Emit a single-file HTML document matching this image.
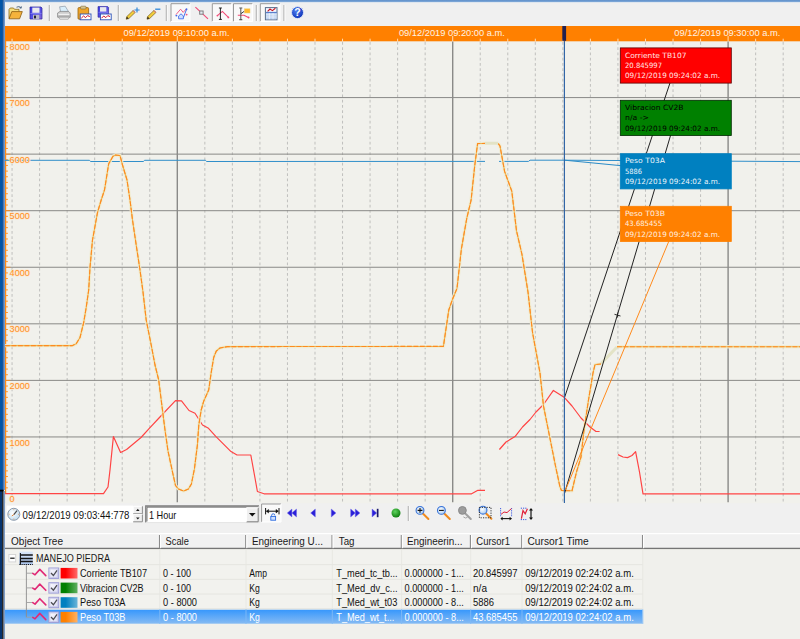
<!DOCTYPE html>
<html lang="es"><head><meta charset="utf-8"><title>Trend</title>
<style>html,body{margin:0;padding:0;background:#f0f0f0;overflow:hidden}body{width:800px;height:639px;position:relative}svg{display:block;position:absolute;left:0;top:0}text{white-space:pre}</style>
</head><body>
<svg width="800" height="639" viewBox="0 0 800 639">
<defs>
<linearGradient id="gsel" x1="0" y1="0" x2="0" y2="1"><stop offset="0" stop-color="#3797fc"/><stop offset="1" stop-color="#86bbf3"/></linearGradient>
<linearGradient id="ghead" x1="0" y1="0" x2="0" y2="1"><stop offset="0" stop-color="#ffffff"/><stop offset="1" stop-color="#f1f1f1"/></linearGradient>
<linearGradient id="gred" x1="0" y1="0" x2="1" y2="0"><stop offset="0.3" stop-color="#ff0000"/><stop offset="1" stop-color="#ff6a6a"/></linearGradient>
<linearGradient id="ggreen" x1="0" y1="0" x2="1" y2="0"><stop offset="0.3" stop-color="#008000"/><stop offset="1" stop-color="#62b062"/></linearGradient>
<linearGradient id="gblue" x1="0" y1="0" x2="1" y2="0"><stop offset="0.3" stop-color="#0080c0"/><stop offset="1" stop-color="#6ab4d8"/></linearGradient>
<linearGradient id="gorange" x1="0" y1="0" x2="1" y2="0"><stop offset="0.3" stop-color="#ff8000"/><stop offset="1" stop-color="#ffb265"/></linearGradient>
<linearGradient id="gchk" x1="0" y1="0" x2="1" y2="1"><stop offset="0" stop-color="#ffffff"/><stop offset="1" stop-color="#d6d6f2"/></linearGradient>
<linearGradient id="gtop" x1="0" y1="0" x2="0" y2="1"><stop offset="0" stop-color="#5d8fca"/><stop offset="0.7" stop-color="#7fa8d8"/><stop offset="1" stop-color="#dfe8f2"/></linearGradient>
<radialGradient id="ghelp" cx="0.4" cy="0.35" r="0.7"><stop offset="0" stop-color="#4f7df0"/><stop offset="1" stop-color="#0a2fb5"/></radialGradient>
<radialGradient id="gball" cx="0.4" cy="0.35" r="0.7"><stop offset="0" stop-color="#5fd35f"/><stop offset="1" stop-color="#0a7a0a"/></radialGradient>
<radialGradient id="gclock" cx="0.4" cy="0.4" r="0.7"><stop offset="0" stop-color="#ffffff"/><stop offset="1" stop-color="#b9d9ee"/></radialGradient>
<radialGradient id="glens" cx="0.4" cy="0.4" r="0.7"><stop offset="0" stop-color="#ffffff"/><stop offset="1" stop-color="#9cc3ef"/></radialGradient>
<linearGradient id="ggrp" x1="0" y1="0" x2="0" y2="1"><stop offset="0" stop-color="#dbe7f9"/><stop offset="1" stop-color="#a9c3ea"/></linearGradient>
<linearGradient id="gflop" x1="0" y1="0" x2="1" y2="1"><stop offset="0" stop-color="#3c3ce0"/><stop offset="0.6" stop-color="#5a54e6"/><stop offset="1" stop-color="#8a6ad8"/></linearGradient>
<clipPath id="plotclip"><rect x="5" y="41" width="795" height="462.5"/></clipPath>
</defs>
<rect x="0" y="0" width="800" height="639" fill="#f0f0f0"/>
<rect x="5" y="41" width="795" height="462.3" fill="#f1f1ec"/>
<rect x="5" y="26" width="795" height="15.3" fill="#ff8000"/>
<g stroke="#bdbdba" stroke-width="0.95" stroke-dasharray="2.75 2.5" fill="none"><line x1="12.06" y1="42" x2="12.06" y2="502.3"/><line x1="39.60" y1="42" x2="39.60" y2="502.3"/><line x1="67.14" y1="42" x2="67.14" y2="502.3"/><line x1="94.68" y1="42" x2="94.68" y2="502.3"/><line x1="122.22" y1="42" x2="122.22" y2="502.3"/><line x1="149.76" y1="42" x2="149.76" y2="502.3"/><line x1="204.84" y1="42" x2="204.84" y2="502.3"/><line x1="232.38" y1="42" x2="232.38" y2="502.3"/><line x1="259.92" y1="42" x2="259.92" y2="502.3"/><line x1="287.46" y1="42" x2="287.46" y2="502.3"/><line x1="315.00" y1="42" x2="315.00" y2="502.3"/><line x1="342.54" y1="42" x2="342.54" y2="502.3"/><line x1="370.08" y1="42" x2="370.08" y2="502.3"/><line x1="397.62" y1="42" x2="397.62" y2="502.3"/><line x1="425.16" y1="42" x2="425.16" y2="502.3"/><line x1="480.24" y1="42" x2="480.24" y2="502.3"/><line x1="507.78" y1="42" x2="507.78" y2="502.3"/><line x1="535.32" y1="42" x2="535.32" y2="502.3"/><line x1="562.86" y1="42" x2="562.86" y2="502.3"/><line x1="590.40" y1="42" x2="590.40" y2="502.3"/><line x1="617.94" y1="42" x2="617.94" y2="502.3"/><line x1="645.48" y1="42" x2="645.48" y2="502.3"/><line x1="673.02" y1="42" x2="673.02" y2="502.3"/><line x1="700.56" y1="42" x2="700.56" y2="502.3"/><line x1="755.64" y1="42" x2="755.64" y2="502.3"/><line x1="783.18" y1="42" x2="783.18" y2="502.3"/></g>
<g stroke="#898987" stroke-width="1.0" fill="none"><line x1="6" y1="436.94" x2="800" y2="436.94"/><line x1="6" y1="380.38" x2="800" y2="380.38"/><line x1="6" y1="323.82" x2="800" y2="323.82"/><line x1="6" y1="267.26" x2="800" y2="267.26"/><line x1="6" y1="210.70" x2="800" y2="210.70"/><line x1="6" y1="154.14" x2="800" y2="154.14"/><line x1="6" y1="97.58" x2="800" y2="97.58"/></g>
<g stroke="#8a8a88" stroke-width="1.4" fill="none"><line x1="177.30" y1="41.5" x2="177.30" y2="502.3"/><line x1="452.70" y1="41.5" x2="452.70" y2="502.3"/><line x1="728.10" y1="41.5" x2="728.10" y2="502.3"/></g>
<g stroke="#ffdcb4" stroke-width="1" fill="none"><line x1="12.06" y1="38.7" x2="12.06" y2="41.3"/><line x1="39.60" y1="38.7" x2="39.60" y2="41.3"/><line x1="67.14" y1="38.7" x2="67.14" y2="41.3"/><line x1="94.68" y1="38.7" x2="94.68" y2="41.3"/><line x1="122.22" y1="38.7" x2="122.22" y2="41.3"/><line x1="149.76" y1="38.7" x2="149.76" y2="41.3"/><line x1="177.30" y1="36" x2="177.30" y2="41.3"/><line x1="204.84" y1="38.7" x2="204.84" y2="41.3"/><line x1="232.38" y1="38.7" x2="232.38" y2="41.3"/><line x1="259.92" y1="38.7" x2="259.92" y2="41.3"/><line x1="287.46" y1="38.7" x2="287.46" y2="41.3"/><line x1="315.00" y1="38.7" x2="315.00" y2="41.3"/><line x1="342.54" y1="38.7" x2="342.54" y2="41.3"/><line x1="370.08" y1="38.7" x2="370.08" y2="41.3"/><line x1="397.62" y1="38.7" x2="397.62" y2="41.3"/><line x1="425.16" y1="38.7" x2="425.16" y2="41.3"/><line x1="452.70" y1="36" x2="452.70" y2="41.3"/><line x1="480.24" y1="38.7" x2="480.24" y2="41.3"/><line x1="507.78" y1="38.7" x2="507.78" y2="41.3"/><line x1="535.32" y1="38.7" x2="535.32" y2="41.3"/><line x1="562.86" y1="38.7" x2="562.86" y2="41.3"/><line x1="590.40" y1="38.7" x2="590.40" y2="41.3"/><line x1="617.94" y1="38.7" x2="617.94" y2="41.3"/><line x1="645.48" y1="38.7" x2="645.48" y2="41.3"/><line x1="673.02" y1="38.7" x2="673.02" y2="41.3"/><line x1="700.56" y1="38.7" x2="700.56" y2="41.3"/><line x1="728.10" y1="36" x2="728.10" y2="41.3"/><line x1="755.64" y1="38.7" x2="755.64" y2="41.3"/><line x1="783.18" y1="38.7" x2="783.18" y2="41.3"/></g>
<text x="176.5" y="35.7" font-size="9.3" fill="#fff3e4" text-anchor="middle" font-family='"Liberation Sans", Arial, sans-serif' textLength="106" lengthAdjust="spacingAndGlyphs">09/12/2019 09:10:00 a.m.</text>
<text x="451.9" y="35.7" font-size="9.3" fill="#fff3e4" text-anchor="middle" font-family='"Liberation Sans", Arial, sans-serif' textLength="106" lengthAdjust="spacingAndGlyphs">09/12/2019 09:20:00 a.m.</text>
<text x="727.3" y="35.7" font-size="9.3" fill="#fff3e4" text-anchor="middle" font-family='"Liberation Sans", Arial, sans-serif' textLength="106" lengthAdjust="spacingAndGlyphs">09/12/2019 09:30:00 a.m.</text>
<rect x="5" y="41" width="1.2" height="453" fill="#ff8a14"/>
<g stroke="#ff8a14" stroke-width="0.9" fill="none"><line x1="6" y1="493.50" x2="10.3" y2="493.50"/><line x1="6" y1="487.84" x2="7.9" y2="487.84"/><line x1="6" y1="482.19" x2="7.9" y2="482.19"/><line x1="6" y1="476.53" x2="7.9" y2="476.53"/><line x1="6" y1="470.88" x2="7.9" y2="470.88"/><line x1="6" y1="465.22" x2="7.9" y2="465.22"/><line x1="6" y1="459.56" x2="7.9" y2="459.56"/><line x1="6" y1="453.91" x2="7.9" y2="453.91"/><line x1="6" y1="448.25" x2="7.9" y2="448.25"/><line x1="6" y1="442.60" x2="7.9" y2="442.60"/><line x1="6" y1="436.94" x2="10.3" y2="436.94"/><line x1="6" y1="431.28" x2="7.9" y2="431.28"/><line x1="6" y1="425.63" x2="7.9" y2="425.63"/><line x1="6" y1="419.97" x2="7.9" y2="419.97"/><line x1="6" y1="414.32" x2="7.9" y2="414.32"/><line x1="6" y1="408.66" x2="7.9" y2="408.66"/><line x1="6" y1="403.00" x2="7.9" y2="403.00"/><line x1="6" y1="397.35" x2="7.9" y2="397.35"/><line x1="6" y1="391.69" x2="7.9" y2="391.69"/><line x1="6" y1="386.04" x2="7.9" y2="386.04"/><line x1="6" y1="380.38" x2="10.3" y2="380.38"/><line x1="6" y1="374.72" x2="7.9" y2="374.72"/><line x1="6" y1="369.07" x2="7.9" y2="369.07"/><line x1="6" y1="363.41" x2="7.9" y2="363.41"/><line x1="6" y1="357.76" x2="7.9" y2="357.76"/><line x1="6" y1="352.10" x2="7.9" y2="352.10"/><line x1="6" y1="346.44" x2="7.9" y2="346.44"/><line x1="6" y1="340.79" x2="7.9" y2="340.79"/><line x1="6" y1="335.13" x2="7.9" y2="335.13"/><line x1="6" y1="329.48" x2="7.9" y2="329.48"/><line x1="6" y1="323.82" x2="10.3" y2="323.82"/><line x1="6" y1="318.16" x2="7.9" y2="318.16"/><line x1="6" y1="312.51" x2="7.9" y2="312.51"/><line x1="6" y1="306.85" x2="7.9" y2="306.85"/><line x1="6" y1="301.20" x2="7.9" y2="301.20"/><line x1="6" y1="295.54" x2="7.9" y2="295.54"/><line x1="6" y1="289.88" x2="7.9" y2="289.88"/><line x1="6" y1="284.23" x2="7.9" y2="284.23"/><line x1="6" y1="278.57" x2="7.9" y2="278.57"/><line x1="6" y1="272.92" x2="7.9" y2="272.92"/><line x1="6" y1="267.26" x2="10.3" y2="267.26"/><line x1="6" y1="261.60" x2="7.9" y2="261.60"/><line x1="6" y1="255.95" x2="7.9" y2="255.95"/><line x1="6" y1="250.29" x2="7.9" y2="250.29"/><line x1="6" y1="244.64" x2="7.9" y2="244.64"/><line x1="6" y1="238.98" x2="7.9" y2="238.98"/><line x1="6" y1="233.32" x2="7.9" y2="233.32"/><line x1="6" y1="227.67" x2="7.9" y2="227.67"/><line x1="6" y1="222.01" x2="7.9" y2="222.01"/><line x1="6" y1="216.36" x2="7.9" y2="216.36"/><line x1="6" y1="210.70" x2="10.3" y2="210.70"/><line x1="6" y1="205.04" x2="7.9" y2="205.04"/><line x1="6" y1="199.39" x2="7.9" y2="199.39"/><line x1="6" y1="193.73" x2="7.9" y2="193.73"/><line x1="6" y1="188.08" x2="7.9" y2="188.08"/><line x1="6" y1="182.42" x2="7.9" y2="182.42"/><line x1="6" y1="176.76" x2="7.9" y2="176.76"/><line x1="6" y1="171.11" x2="7.9" y2="171.11"/><line x1="6" y1="165.45" x2="7.9" y2="165.45"/><line x1="6" y1="159.80" x2="7.9" y2="159.80"/><line x1="6" y1="154.14" x2="10.3" y2="154.14"/><line x1="6" y1="148.48" x2="7.9" y2="148.48"/><line x1="6" y1="142.83" x2="7.9" y2="142.83"/><line x1="6" y1="137.17" x2="7.9" y2="137.17"/><line x1="6" y1="131.52" x2="7.9" y2="131.52"/><line x1="6" y1="125.86" x2="7.9" y2="125.86"/><line x1="6" y1="120.20" x2="7.9" y2="120.20"/><line x1="6" y1="114.55" x2="7.9" y2="114.55"/><line x1="6" y1="108.89" x2="7.9" y2="108.89"/><line x1="6" y1="103.24" x2="7.9" y2="103.24"/><line x1="6" y1="97.58" x2="10.3" y2="97.58"/><line x1="6" y1="91.92" x2="7.9" y2="91.92"/><line x1="6" y1="86.27" x2="7.9" y2="86.27"/><line x1="6" y1="80.61" x2="7.9" y2="80.61"/><line x1="6" y1="74.96" x2="7.9" y2="74.96"/><line x1="6" y1="69.30" x2="7.9" y2="69.30"/><line x1="6" y1="63.64" x2="7.9" y2="63.64"/><line x1="6" y1="57.99" x2="7.9" y2="57.99"/><line x1="6" y1="52.33" x2="7.9" y2="52.33"/><line x1="6" y1="46.68" x2="7.9" y2="46.68"/></g>
<g clip-path="url(#plotclip)" fill="none" stroke-linejoin="round" stroke-linecap="butt">
<polyline points="5.0,160.3 89.5,160.3 90.5,161.5 143.5,161.5 144.5,160.3 205.5,160.3 206.5,161.5 485.0,161.4" stroke="#318fca" stroke-width="1.0"/>
<polyline points="499.0,161.4 528.5,161.4 530.0,160.2 564.5,160.2 800.0,161.6" stroke="#318fca" stroke-width="1.0"/>
<line x1="564.5" y1="160.2" x2="676" y2="171" stroke="#2b8cc8" stroke-width="1"/>
<polyline points="5.0,493.7 103.5,493.7 108.0,487.0 110.0,470.0 113.4,436.6 120.6,452.5 126.6,449.5 141.0,437.5 150.0,427.6 159.0,418.0 175.5,400.6 181.5,400.8 189.0,410.5 195.0,413.2 202.5,425.0 208.5,428.3 216.0,436.6 231.0,451.6 237.0,455.0 250.8,455.0 255.0,478.0 257.4,491.5 264.0,493.8 471.6,493.8 477.9,490.3 485.0,490.3" stroke="#ff4444" stroke-width="1.2"/>
<polyline points="499.4,449.5 506.0,442.0 515.0,436.6 522.5,427.0 530.0,419.5 536.0,412.0 543.5,404.5 553.4,390.4 564.5,397.6 572.0,406.0 581.0,418.0 590.0,427.0 596.0,431.5 599.6,431.5" stroke="#ff4444" stroke-width="1.2"/>
<polyline points="618.0,454.6 623.0,457.0 627.5,457.6 632.0,455.5 635.6,451.6 639.5,472.0 643.0,493.8 800.0,493.8" stroke="#ff4444" stroke-width="1.2"/>
<polyline points="5.0,345.6 72.5,345.6 76.2,343.8 80.0,337.5 83.7,322.5 86.2,307.5 88.7,290.0 90.0,267.5 92.5,240.0 97.5,212.5 101.2,200.0 104.5,190.0 108.7,163.8 113.0,156.3 115.5,155.0 120.0,155.5 122.5,165.0 127.0,180.0 130.0,200.0 132.5,220.0 136.2,245.0 140.0,270.0 143.0,292.0 146.2,320.0 151.2,345.0 155.0,365.0 158.7,380.0 161.2,400.0 165.0,430.0 168.0,451.0 172.5,472.0 175.5,485.5 178.5,489.0 183.6,491.0 188.4,489.0 191.4,484.0 194.4,469.0 197.4,445.0 198.8,425.0 201.2,410.0 203.7,401.2 208.7,390.0 211.2,372.5 213.7,357.5 216.2,351.2 220.0,348.0 227.5,346.6 443.4,346.4 448.8,310.0 452.6,299.0 457.0,288.4 461.4,248.8 466.8,218.2 471.1,200.2 474.7,166.0 477.6,143.6 485.0,143.4" stroke="#f1ecd2" stroke-width="3.4" stroke-opacity="0.9"/>
<polyline points="498.3,143.6 500.0,146.0 504.6,171.4 511.8,191.2 516.5,230.8 521.9,254.2 528.0,292.0 532.6,333.0 540.0,373.0 543.5,406.0 549.5,436.0 555.5,466.0 560.0,487.0 561.5,490.5 572.0,490.8 576.5,472.0 581.0,457.0 584.0,430.0 588.5,400.0 593.0,373.0 595.0,364.6 601.0,364.0" stroke="#f1ecd2" stroke-width="3.4" stroke-opacity="0.9"/>
<polyline points="617.0,346.7 800.0,346.7" stroke="#f1ecd2" stroke-width="3.4" stroke-opacity="0.9"/>
<polyline points="485.0,143.3 498.3,143.3" stroke="#e3e3c6" stroke-width="3"/>
<polyline points="601.0,363.6 617.0,347.0" stroke="#e3e3c6" stroke-width="3"/>
<polyline points="5.0,345.6 72.5,345.6 76.2,343.8 80.0,337.5 83.7,322.5 86.2,307.5 88.7,290.0 90.0,267.5 92.5,240.0 97.5,212.5 101.2,200.0 104.5,190.0 108.7,163.8 113.0,156.3 115.5,155.0 120.0,155.5 122.5,165.0 127.0,180.0 130.0,200.0 132.5,220.0 136.2,245.0 140.0,270.0 143.0,292.0 146.2,320.0 151.2,345.0 155.0,365.0 158.7,380.0 161.2,400.0 165.0,430.0 168.0,451.0 172.5,472.0 175.5,485.5 178.5,489.0 183.6,491.0 188.4,489.0 191.4,484.0 194.4,469.0 197.4,445.0 198.8,425.0 201.2,410.0 203.7,401.2 208.7,390.0 211.2,372.5 213.7,357.5 216.2,351.2 220.0,348.0 227.5,346.6 443.4,346.4 448.8,310.0 452.6,299.0 457.0,288.4 461.4,248.8 466.8,218.2 471.1,200.2 474.7,166.0 477.6,143.6 485.0,143.4" stroke="#e9b654" stroke-width="1.05"/>
<polyline points="5.0,345.6 72.5,345.6 76.2,343.8 80.0,337.5 83.7,322.5 86.2,307.5 88.7,290.0 90.0,267.5 92.5,240.0 97.5,212.5 101.2,200.0 104.5,190.0 108.7,163.8 113.0,156.3 115.5,155.0 120.0,155.5 122.5,165.0 127.0,180.0 130.0,200.0 132.5,220.0 136.2,245.0 140.0,270.0 143.0,292.0 146.2,320.0 151.2,345.0 155.0,365.0 158.7,380.0 161.2,400.0 165.0,430.0 168.0,451.0 172.5,472.0 175.5,485.5 178.5,489.0 183.6,491.0 188.4,489.0 191.4,484.0 194.4,469.0 197.4,445.0 198.8,425.0 201.2,410.0 203.7,401.2 208.7,390.0 211.2,372.5 213.7,357.5 216.2,351.2 220.0,348.0 227.5,346.6 443.4,346.4 448.8,310.0 452.6,299.0 457.0,288.4 461.4,248.8 466.8,218.2 471.1,200.2 474.7,166.0 477.6,143.6 485.0,143.4" stroke="#ff8a20" stroke-width="1.15" stroke-dasharray="4.8 1.7"/>
<polyline points="498.3,143.6 500.0,146.0 504.6,171.4 511.8,191.2 516.5,230.8 521.9,254.2 528.0,292.0 532.6,333.0 540.0,373.0 543.5,406.0 549.5,436.0 555.5,466.0 560.0,487.0 561.5,490.5 572.0,490.8 576.5,472.0 581.0,457.0 584.0,430.0 588.5,400.0 593.0,373.0 595.0,364.6 601.0,364.0" stroke="#e9b654" stroke-width="1.05"/>
<polyline points="498.3,143.6 500.0,146.0 504.6,171.4 511.8,191.2 516.5,230.8 521.9,254.2 528.0,292.0 532.6,333.0 540.0,373.0 543.5,406.0 549.5,436.0 555.5,466.0 560.0,487.0 561.5,490.5 572.0,490.8 576.5,472.0 581.0,457.0 584.0,430.0 588.5,400.0 593.0,373.0 595.0,364.6 601.0,364.0" stroke="#ff8a20" stroke-width="1.15" stroke-dasharray="4.8 1.7"/>
<polyline points="617.0,346.7 800.0,346.7" stroke="#e9b654" stroke-width="1.05"/>
<polyline points="617.0,346.7 800.0,346.7" stroke="#ff8a20" stroke-width="1.15" stroke-dasharray="4.8 1.7"/>
<line x1="564.5" y1="397.6" x2="676" y2="65" stroke="#222222" stroke-width="1.0"/>
<line x1="564.5" y1="493.5" x2="676" y2="117" stroke="#222222" stroke-width="1.0"/>
<line x1="565.5" y1="490" x2="676" y2="224" stroke="#ff8a1c" stroke-width="1"/>
<path d="M614.5 314.3 L620.5 316 M617.8 312.5 L617.3 317.5" stroke="#1c1c1c" stroke-width="0.9"/>
<line x1="564.4" y1="41" x2="564.4" y2="503" stroke="#2d62a4" stroke-width="1.15"/>
</g>
<rect x="562.3" y="26" width="3.8" height="14.8" fill="#23204e"/>
<text x="9.6" y="502.4" font-size="9.3" fill="#ff8f26" text-anchor="start" font-family='"Liberation Sans", Arial, sans-serif' textLength="5.1" lengthAdjust="spacingAndGlyphs" stroke="#fbe9d0" stroke-width="1.6" stroke-opacity="0.9" paint-order="stroke">0</text>
<text x="9.6" y="445.5" font-size="9.3" fill="#ff8f26" text-anchor="start" font-family='"Liberation Sans", Arial, sans-serif' textLength="20.3" lengthAdjust="spacingAndGlyphs" stroke="#fbe9d0" stroke-width="1.6" stroke-opacity="0.9" paint-order="stroke">1000</text>
<text x="9.6" y="389.0" font-size="9.3" fill="#ff8f26" text-anchor="start" font-family='"Liberation Sans", Arial, sans-serif' textLength="20.3" lengthAdjust="spacingAndGlyphs" stroke="#fbe9d0" stroke-width="1.6" stroke-opacity="0.9" paint-order="stroke">2000</text>
<text x="9.6" y="332.4" font-size="9.3" fill="#ff8f26" text-anchor="start" font-family='"Liberation Sans", Arial, sans-serif' textLength="20.3" lengthAdjust="spacingAndGlyphs" stroke="#fbe9d0" stroke-width="1.6" stroke-opacity="0.9" paint-order="stroke">3000</text>
<text x="9.6" y="275.9" font-size="9.3" fill="#ff8f26" text-anchor="start" font-family='"Liberation Sans", Arial, sans-serif' textLength="20.3" lengthAdjust="spacingAndGlyphs" stroke="#fbe9d0" stroke-width="1.6" stroke-opacity="0.9" paint-order="stroke">4000</text>
<text x="9.6" y="219.3" font-size="9.3" fill="#ff8f26" text-anchor="start" font-family='"Liberation Sans", Arial, sans-serif' textLength="20.3" lengthAdjust="spacingAndGlyphs" stroke="#fbe9d0" stroke-width="1.6" stroke-opacity="0.9" paint-order="stroke">5000</text>
<text x="9.6" y="162.7" font-size="9.3" fill="#ff8f26" text-anchor="start" font-family='"Liberation Sans", Arial, sans-serif' textLength="20.3" lengthAdjust="spacingAndGlyphs" stroke="#fbe9d0" stroke-width="1.6" stroke-opacity="0.9" paint-order="stroke">6000</text>
<text x="9.6" y="106.2" font-size="9.3" fill="#ff8f26" text-anchor="start" font-family='"Liberation Sans", Arial, sans-serif' textLength="20.3" lengthAdjust="spacingAndGlyphs" stroke="#fbe9d0" stroke-width="1.6" stroke-opacity="0.9" paint-order="stroke">7000</text>
<text x="9.6" y="50.4" font-size="9.3" fill="#ff8f26" text-anchor="start" font-family='"Liberation Sans", Arial, sans-serif' textLength="20.3" lengthAdjust="spacingAndGlyphs" stroke="#fbe9d0" stroke-width="1.6" stroke-opacity="0.9" paint-order="stroke">8000</text>
<rect x="620.3" y="47.9" width="111" height="35.2" fill="#ff0000" stroke="#5a0000" stroke-width="0.8"/>
<text x="625" y="57.6" font-size="7.3" fill="#ffe6e6" text-anchor="start" font-family='"DejaVu Sans Condensed", "DejaVu Sans", "Liberation Sans", sans-serif' textLength="61.5" lengthAdjust="spacingAndGlyphs">Corriente TB107</text>
<text x="625" y="68.0" font-size="7.3" fill="#ffe6e6" text-anchor="start" font-family='"DejaVu Sans Condensed", "DejaVu Sans", "Liberation Sans", sans-serif' textLength="37" lengthAdjust="spacingAndGlyphs">20.845997</text>
<text x="625" y="78.4" font-size="7.3" fill="#ffe6e6" text-anchor="start" font-family='"DejaVu Sans Condensed", "DejaVu Sans", "Liberation Sans", sans-serif' textLength="95" lengthAdjust="spacingAndGlyphs">09/12/2019 09:24:02 a.m.</text>
<rect x="620.3" y="100.3" width="111" height="35.2" fill="#008000" stroke="#002800" stroke-width="0.8"/>
<text x="625" y="110.0" font-size="7.3" fill="#000000" text-anchor="start" font-family='"DejaVu Sans Condensed", "DejaVu Sans", "Liberation Sans", sans-serif' textLength="58.5" lengthAdjust="spacingAndGlyphs">Vibracion CV2B</text>
<text x="625" y="120.4" font-size="7.3" fill="#000000" text-anchor="start" font-family='"DejaVu Sans Condensed", "DejaVu Sans", "Liberation Sans", sans-serif' textLength="24" lengthAdjust="spacingAndGlyphs">n/a -&gt;</text>
<text x="625" y="130.8" font-size="7.3" fill="#000000" text-anchor="start" font-family='"DejaVu Sans Condensed", "DejaVu Sans", "Liberation Sans", sans-serif' textLength="95" lengthAdjust="spacingAndGlyphs">09/12/2019 09:24:02 a.m.</text>
<rect x="620.3" y="153.7" width="111" height="35.2" fill="#0080c0" stroke="#0080c0" stroke-width="0.8"/>
<text x="625" y="163.4" font-size="7.3" fill="#eaf5fb" text-anchor="start" font-family='"DejaVu Sans Condensed", "DejaVu Sans", "Liberation Sans", sans-serif' textLength="40" lengthAdjust="spacingAndGlyphs">Peso T03A</text>
<text x="625" y="173.8" font-size="7.3" fill="#eaf5fb" text-anchor="start" font-family='"DejaVu Sans Condensed", "DejaVu Sans", "Liberation Sans", sans-serif' textLength="17" lengthAdjust="spacingAndGlyphs">5886</text>
<text x="625" y="184.2" font-size="7.3" fill="#eaf5fb" text-anchor="start" font-family='"DejaVu Sans Condensed", "DejaVu Sans", "Liberation Sans", sans-serif' textLength="95" lengthAdjust="spacingAndGlyphs">09/12/2019 09:24:02 a.m.</text>
<rect x="620.3" y="206.3" width="111" height="35.2" fill="#ff8000" stroke="#ff8000" stroke-width="0.8"/>
<text x="625" y="216.0" font-size="7.3" fill="#fff0e0" text-anchor="start" font-family='"DejaVu Sans Condensed", "DejaVu Sans", "Liberation Sans", sans-serif' textLength="40" lengthAdjust="spacingAndGlyphs">Peso T03B</text>
<text x="625" y="226.4" font-size="7.3" fill="#fff0e0" text-anchor="start" font-family='"DejaVu Sans Condensed", "DejaVu Sans", "Liberation Sans", sans-serif' textLength="37" lengthAdjust="spacingAndGlyphs">43.685455</text>
<text x="625" y="236.8" font-size="7.3" fill="#fff0e0" text-anchor="start" font-family='"DejaVu Sans Condensed", "DejaVu Sans", "Liberation Sans", sans-serif' textLength="95" lengthAdjust="spacingAndGlyphs">09/12/2019 09:24:02 a.m.</text>
<rect x="0" y="0" width="800" height="2.6" fill="url(#gtop)"/>
<rect x="0" y="0" width="3.2" height="490" fill="#0054a8"/>
<rect x="3.2" y="0" width="1.8" height="490" fill="#6c98d2"/>
<rect x="2.7" y="0" width="0.9" height="490" fill="#355f92"/>
<rect x="0" y="490" width="2.2" height="149" fill="#06336e"/>
<rect x="2.2" y="490" width="1.4" height="149" fill="#000000"/>
<rect x="0" y="489.7" width="3.4" height="1.8" fill="#000000"/>
<rect x="3.6" y="491" width="1.5" height="148" fill="#7d9cc6"/>
<line x1="49.3" y1="5" x2="49.3" y2="21" stroke="#a2a2a2" stroke-width="1"/><line x1="50.3" y1="5" x2="50.3" y2="21" stroke="#fbfbfb" stroke-width="1"/>
<line x1="118.3" y1="5" x2="118.3" y2="21" stroke="#a2a2a2" stroke-width="1"/><line x1="119.3" y1="5" x2="119.3" y2="21" stroke="#fbfbfb" stroke-width="1"/>
<line x1="166.3" y1="5" x2="166.3" y2="21" stroke="#a2a2a2" stroke-width="1"/><line x1="167.3" y1="5" x2="167.3" y2="21" stroke="#fbfbfb" stroke-width="1"/>
<line x1="256.3" y1="5" x2="256.3" y2="21" stroke="#a2a2a2" stroke-width="1"/><line x1="257.3" y1="5" x2="257.3" y2="21" stroke="#fbfbfb" stroke-width="1"/>
<line x1="284" y1="5" x2="284" y2="21" stroke="#a2a2a2" stroke-width="1"/><line x1="285" y1="5" x2="285" y2="21" stroke="#fbfbfb" stroke-width="1"/>
<rect x="171" y="3.7" width="19" height="17.8" fill="#f9f9f9"/>
<path d="M171 21.5 V3.7 H190" fill="none" stroke="#9a9a9a" stroke-width="1"/>
<path d="M190 3.7 V21.5 H171" fill="none" stroke="#ffffff" stroke-width="1"/>
<rect x="212.3" y="3.7" width="19" height="17.8" fill="#f9f9f9"/>
<path d="M212.3 21.5 V3.7 H231.3" fill="none" stroke="#9a9a9a" stroke-width="1"/>
<path d="M231.3 3.7 V21.5 H212.3" fill="none" stroke="#ffffff" stroke-width="1"/>
<rect x="233.5" y="3.7" width="19" height="17.8" fill="#f9f9f9"/>
<path d="M233.5 21.5 V3.7 H252.5" fill="none" stroke="#9a9a9a" stroke-width="1"/>
<path d="M252.5 3.7 V21.5 H233.5" fill="none" stroke="#ffffff" stroke-width="1"/>
<rect x="260.3" y="3.7" width="19.7" height="17.8" fill="#f9f9f9"/>
<path d="M260.3 21.5 V3.7 H280.0" fill="none" stroke="#9a9a9a" stroke-width="1"/>
<path d="M280.0 3.7 V21.5 H260.3" fill="none" stroke="#ffffff" stroke-width="1"/>
<g><path d="M9 18.5 L9 9.5 L10.2 8 L13.5 8 L14.5 9.3 L19 9.3 L19 11.5" fill="#f6dc7a" stroke="#8a6a1c" stroke-width="0.8"/><path d="M9 18.8 L11.8 11.6 L22.3 11.6 L19.6 18.8 Z" fill="#f5b33c" stroke="#8a5a10" stroke-width="0.8"/><path d="M16.5 7.2 Q19 5.8 21 7.6 M21.4 6.4 L21.2 8.2 L19.6 7.8" fill="none" stroke="#46607e" stroke-width="0.9"/></g>
<g transform="translate(30 7) scale(1.0)"><path d="M0 0 H11 L12 1 V12 H0 Z" fill="url(#gflop)" stroke="#2a2498" stroke-width="0.7"/><rect x="2.3" y="0.6" width="7.2" height="5.2" fill="#e9e9ee"/><rect x="3" y="7.8" width="6.3" height="4.2" fill="#b9b9c6"/><rect x="4" y="8.6" width="2" height="2.8" fill="#20203a"/><path d="M0.5 6.5 L11.5 6.5" stroke="#7a78f0" stroke-width="1"/></g>
<g><path d="M60.8 12.6 L59.6 6.8 L65.2 6.2 L68.6 11.8 Z" fill="#d9eefb" stroke="#8c98a6" stroke-width="0.7"/><path d="M57.6 13 L60 11.4 H68.6 L70.2 13 V17.2 H57.6 Z" fill="#cdcdcd" stroke="#808080" stroke-width="0.7"/><path d="M58.6 17.2 L59.8 19.2 H68.2 L69.4 17.2 Z" fill="#efefef" stroke="#8c8c8c" stroke-width="0.6"/><rect x="58.4" y="13.8" width="11" height="1.1" fill="#f4f4f4"/><rect x="58.4" y="15.6" width="11" height="1.2" fill="#a8a8a8"/></g>
<g><rect x="78" y="7.6" width="10.6" height="11.6" rx="1" fill="#f0a428" stroke="#94620e" stroke-width="0.8"/><rect x="80.6" y="6.2" width="5.4" height="2.8" rx="0.8" fill="#d9c38a" stroke="#7a6a3a" stroke-width="0.6"/><rect x="80.2" y="14" width="10.8" height="5.8" fill="#ffffff" stroke="#2a50b8" stroke-width="0.9"/><path d="M81.3 18.2 L83.5 16 L85.6 17.6 L87.6 15.6 L89.8 16.6" fill="none" stroke="#d0102a" stroke-width="1"/></g>
<g transform="translate(98 6.6) scale(0.88)"><path d="M0 0 H11 L12 1 V12 H0 Z" fill="url(#gflop)" stroke="#2a2498" stroke-width="0.7"/><rect x="2.3" y="0.6" width="7.2" height="5.2" fill="#e9e9ee"/><rect x="3" y="7.8" width="6.3" height="4.2" fill="#b9b9c6"/><rect x="4" y="8.6" width="2" height="2.8" fill="#20203a"/><path d="M0.5 6.5 L11.5 6.5" stroke="#7a78f0" stroke-width="1"/></g>
<g><rect x="100.4" y="14" width="10.8" height="5.8" fill="#ffffff" stroke="#2a50b8" stroke-width="0.9"/><path d="M101.5 18.2 L103.7 16 L105.8 17.6 L107.8 15.6 L110 16.6" fill="none" stroke="#d0102a" stroke-width="1"/></g>
<g transform="translate(125.6 7.6)"><path d="M0.6 11.6 L1.2 9 L7.6 2.8 L9.6 4.8 L3.2 11 Z" fill="#f2cd3c" stroke="#7a6420" stroke-width="0.7"/><path d="M0.6 11.6 L1.2 9 L3.2 11 Z" fill="#3a3020"/><path d="M7 3.4 L9 5.4 L9.7 4.7 L7.7 2.7 Z" fill="#d87a7a"/><path d="M8.8 2.4 H14 M11.4 -0.2 V5" stroke="#2f86d8" stroke-width="1.2" fill="none"/></g>
<g transform="translate(146.4 7.6)"><path d="M0.6 11.6 L1.2 9 L7.6 2.8 L9.6 4.8 L3.2 11 Z" fill="#f2cd3c" stroke="#7a6420" stroke-width="0.7"/><path d="M0.6 11.6 L1.2 9 L3.2 11 Z" fill="#3a3020"/><path d="M7 3.4 L9 5.4 L9.7 4.7 L7.7 2.7 Z" fill="#d87a7a"/><path d="M8.8 1.6 H14" stroke="#2f86d8" stroke-width="1.3" fill="none"/></g>
<g fill="none"><path d="M176 14.6 L180.6 9.2 L183.2 12.4 L186.2 9" stroke="#f2577f" stroke-width="0.95"/><path d="M186.5 9.4 L183.4 17.6" stroke="#3f68ea" stroke-width="0.95"/><path d="M178.6 16 L181 13.8 L183.4 16 V18.8 H178.6 Z" fill="#cfe0ff" stroke="#3f68ea" stroke-width="0.85"/><circle cx="176.4" cy="15.6" r="0.95" fill="#3f68ea"/><circle cx="186.5" cy="9.2" r="0.95" fill="#3f68ea"/><circle cx="186.6" cy="14.6" r="0.95" fill="#f2577f"/></g>
<g><path d="M195.4 7.2 L208 18.8" stroke="#f24a76" stroke-width="1.15"/><rect x="199.7" y="11" width="3.4" height="3.2" fill="#e4eaf2" stroke="#7a7a7a" stroke-width="0.95"/></g>
<g fill="none"><path d="M217.4 15.6 L222.4 11.4 L228.4 17.4" stroke="#f24a76" stroke-width="1.05"/><circle cx="217.4" cy="15.6" r="0.9" fill="#f24a76"/><circle cx="228.4" cy="17.4" r="0.9" fill="#f24a76"/><path d="M220.4 8 V19.4 M218.9 8 H221.9 M218.9 19.4 H221.9" stroke="#1a1a1a" stroke-width="0.95"/></g>
<g fill="none"><path d="M237.8 15.2 H244 L248.4 17.4" stroke="#f24a76" stroke-width="1.15"/><circle cx="248.6" cy="17.5" r="0.9" fill="#f24a76"/><path d="M240.8 8 V19.6 M239.3 8 H242.3 M239.3 19.6 H242.3" stroke="#5a5a5a" stroke-width="1.05"/><path d="M241 13.6 L244.6 11" stroke="#1a1a1a" stroke-width="0.85"/><rect x="244.4" y="8.8" width="5.6" height="4.2" fill="#ffb82e" stroke="#f0d070" stroke-width="0.5"/></g>
<g><rect x="265.4" y="7.6" width="11.6" height="12.2" fill="#f4f8ff" stroke="#5a6e8c" stroke-width="1"/><rect x="266" y="12.6" width="10.6" height="6.6" fill="#bcd2f2"/><path d="M266 14.8 H276.6 M266 17 H276.6 M269.4 12.6 V19.2 M273 12.6 V19.2" stroke="#f2f6fc" stroke-width="0.7"/><path d="M266 12.4 H276.8" stroke="#3a64c0" stroke-width="0.9"/><path d="M267.6 11.4 L270 9 L272.4 10.6 L275.4 8.2" fill="none" stroke="#c8141e" stroke-width="1.1"/></g>
<circle cx="297.5" cy="12.6" r="6" fill="url(#ghelp)" stroke="#dfe6f6" stroke-width="1"/>
<text x="297.5" y="16.3" font-size="10.5" fill="#ffffff" text-anchor="middle" font-family='"Liberation Sans", Arial, sans-serif' font-weight="bold">?</text>
<rect x="5" y="503.3" width="795" height="30.7" fill="#f0f0f0"/>
<rect x="6.5" y="505.6" width="126.5" height="17" fill="#ffffff"/>
<g><circle cx="13.8" cy="514.3" r="6" fill="url(#gclock)" stroke="#8a98aa" stroke-width="1"/><path d="M13.8 514.6 L17 510.6" stroke="#4a4a4a" stroke-width="1.2"/><path d="M13.8 514.6 L11.8 516" stroke="#e07820" stroke-width="0.9"/><path d="M13.8 509.2 v1 M13.8 518.6 v1 M8.6 514.3 h1 M18 514.3 h1" stroke="#e09050" stroke-width="0.8"/></g>
<text x="22.6" y="518.7" font-size="10.9" fill="#111111" text-anchor="start" font-family='"Liberation Sans", Arial, sans-serif' textLength="106.8" lengthAdjust="spacingAndGlyphs">09/12/2019 09:03:44:778</text>
<rect x="133.2" y="506.2" width="9" height="15.6" fill="#f0f0f0"/>
<path d="M133.2 513.8 V506.3 H142.2" fill="none" stroke="#ffffff" stroke-width="1"/><path d="M142.4 506.3 V513.8 H133.2" fill="none" stroke="#8c8c8c" stroke-width="1"/>
<path d="M133.2 521.8 V514.6 H142.2" fill="none" stroke="#ffffff" stroke-width="1"/><path d="M142.4 514.6 V521.8 H133.2" fill="none" stroke="#8c8c8c" stroke-width="1"/>
<path d="M136 511 L137.8 508.8 L139.6 511 Z M136 517.4 L137.8 519.6 L139.6 517.4 Z" fill="#222"/>
<rect x="145.8" y="506" width="113.2" height="16.4" fill="#ffffff"/>
<path d="M145.8 522.6 V506 H259" fill="none" stroke="#7e7e7e" stroke-width="1.4"/><path d="M259.2 506 V522.6 H145.8" fill="none" stroke="#e4e4e4" stroke-width="1"/>
<path d="M147 521.4 V507.2 H258" fill="none" stroke="#5c5c5c" stroke-width="0.8"/>
<rect x="246.4" y="507.6" width="11.6" height="14" fill="#efefef"/><path d="M258.2 507.6 V521.8 H246.4" fill="none" stroke="#7a7a7a" stroke-width="1"/><path d="M246.6 521.6 V507.8 H258" fill="none" stroke="#ffffff" stroke-width="1"/>
<path d="M249 513 H255.6 L252.3 516.4 Z" fill="#111"/>
<text x="149" y="518.7" font-size="10.9" fill="#111111" text-anchor="start" font-family='"Liberation Sans", Arial, sans-serif' textLength="27.4" lengthAdjust="spacingAndGlyphs">1 Hour</text>
<rect x="261.6" y="504" width="19.4" height="18" fill="#f9f9f9"/>
<path d="M261.6 522 V504 H281.0" fill="none" stroke="#9a9a9a" stroke-width="1"/>
<path d="M281.0 504 V522 H261.6" fill="none" stroke="#ffffff" stroke-width="1"/>
<g fill="none" stroke="#111" stroke-width="1"><path d="M265.6 508 V514.4 M279 508 V514.4 M266.4 511.2 H278.2"/><path d="M268.6 509.4 L266.4 511.2 L268.6 513 Z M276 509.4 L278.2 511.2 L276 513 Z" fill="#111" stroke-width="0.5"/></g>
<g><path d="M271.6 516.6 V515.4 Q271.6 513.8 273.2 513.8 Q274.8 513.8 274.8 515.4" fill="none" stroke="#2a6ae0" stroke-width="0.9"/><rect x="270.8" y="516.4" width="4.8" height="3.8" fill="#cfe0ff" stroke="#2a6ae0" stroke-width="0.9"/></g>
<path d="M291.90000000000003 509.1 L287.3 513 L291.90000000000003 516.9 ZM296.5 509.1 L291.9 513 L296.5 516.9 ZM315.3 509.1 L310.7 513 L315.3 516.9 ZM331.3 509.1 L335.90000000000003 513 L331.3 516.9 ZM350.7 509.1 L355.3 513 L350.7 516.9 ZM355.3 509.1 L359.90000000000003 513 L355.3 516.9 ZM372.09999999999997 509.1 L376.7 513 L372.09999999999997 516.9 Z" fill="#2a1fd8" stroke="#6a64e8" stroke-width="0.5"/>
<rect x="376.8" y="508.8" width="1.7" height="8.4" fill="#1a1a6a"/>
<circle cx="396" cy="513" r="4.5" fill="url(#gball)"/>
<line x1="408.3" y1="506" x2="408.3" y2="521" stroke="#a2a2a2" stroke-width="1"/><line x1="409.3" y1="506" x2="409.3" y2="521" stroke="#fbfbfb" stroke-width="1"/>
<path d="M422.6 513.1999999999999 L428.4 519.0" stroke="#f08a1c" stroke-width="2" stroke-linecap="round"/>
<circle cx="420" cy="510.4" r="3.9" fill="url(#glens)" stroke="#3a74d8" stroke-width="1.1"/>
<path d="M417.6 510.4 H422.4 M420 508.0 V512.8" stroke="#111" stroke-width="1.1"/>
<path d="M444.0 513.1999999999999 L449.79999999999995 519.0" stroke="#f08a1c" stroke-width="2" stroke-linecap="round"/>
<circle cx="441.4" cy="510.4" r="3.9" fill="url(#glens)" stroke="#3a74d8" stroke-width="1.1"/>
<path d="M439.0 510.4 H443.79999999999995" stroke="#111" stroke-width="1.1"/>
<path d="M465.0 513.1999999999999 L470.79999999999995 519.0" stroke="#a0a0a0" stroke-width="2" stroke-linecap="round"/>
<circle cx="462.4" cy="510.4" r="3.9" fill="#9c9c9c" stroke="#8a8a8a" stroke-width="1"/>
<path d="M463.4 516.9 q2 2 4 0.5" stroke="#9c9c9c" stroke-width="0.9" fill="none"/>
<path d="M485.6 513.0 L491.4 518.8" stroke="#f08a1c" stroke-width="2" stroke-linecap="round"/>
<circle cx="483" cy="510.2" r="3.9" fill="url(#glens)" stroke="#3a74d8" stroke-width="1.1"/>
<rect x="479.4" y="507.4" width="11.6" height="10.4" fill="none" stroke="#222" stroke-width="0.9" stroke-dasharray="1.2 1.2"/>
<g fill="none"><path d="M500.6 508 V517 M511.6 508 V517" stroke="#2a4ae0" stroke-width="0.9" stroke-dasharray="1.2 1"/><path d="M501 514.4 L504 512 L507 512.6 L511.4 508.6" stroke="#e0203a" stroke-width="1"/><path d="M501 518.6 H511.4" stroke="#111" stroke-width="1.1"/><path d="M502.6 516.8 L500.4 518.6 L502.6 520.4 Z M509.6 516.8 L511.8 518.6 L509.6 520.4 Z" fill="#111"/></g>
<g fill="none"><path d="M520.8 508.2 H526.6 M520.8 519.6 H526.6" stroke="#2a4ae0" stroke-width="0.9" stroke-dasharray="1.2 1"/><path d="M521.4 518.6 L523 510.6 L525.2 513.8 L527.4 508.8" stroke="#e0203a" stroke-width="1.2"/><path d="M531 509.4 V518.4" stroke="#111" stroke-width="1.2"/><path d="M529 510.6 L531 508 L533 510.6 Z M529 517.4 L531 520 L533 517.4 Z" fill="#111"/></g>
<rect x="5" y="534" width="795" height="14.6" fill="#f1f1f1"/>
<line x1="5" y1="533.6" x2="800" y2="533.6" stroke="#ffffff" stroke-width="1.1"/>
<line x1="5" y1="548.3" x2="800" y2="548.3" stroke="#757575" stroke-width="1.3"/><line x1="5" y1="549.5" x2="800" y2="549.5" stroke="#dcdcd8" stroke-width="0.9"/>
<rect x="5" y="549.6" width="637.5" height="73.6" fill="#f2f2ee"/>
<rect x="642.5" y="549.6" width="157.5" height="89.4" fill="#f0f0ec"/>
<rect x="5" y="623.2" width="637.5" height="15.8" fill="#f0f0ec"/>
<rect x="5" y="609.7" width="637.4" height="14" fill="url(#gsel)"/>
<line x1="5" y1="564.7" x2="642.5" y2="564.7" stroke="#e3e3de" stroke-width="0.9"/>
<line x1="5" y1="579.4" x2="642.5" y2="579.4" stroke="#e3e3de" stroke-width="0.9"/>
<line x1="5" y1="594" x2="642.5" y2="594" stroke="#e3e3de" stroke-width="0.9"/>
<line x1="5" y1="608.7" x2="642.5" y2="608.7" stroke="#e3e3de" stroke-width="0.9"/>
<line x1="159.5" y1="535" x2="159.5" y2="548.2" stroke="#8a8a8a" stroke-width="1.1"/><line x1="160.6" y1="535" x2="160.6" y2="548.2" stroke="#ffffff" stroke-width="1"/>
<line x1="159.8" y1="549.6" x2="159.8" y2="608.9" stroke="#e6e6e1" stroke-width="0.9"/>
<line x1="159.8" y1="609.3" x2="159.8" y2="623.9" stroke="#7fbaf6" stroke-width="0.9"/>
<line x1="245.7" y1="535" x2="245.7" y2="548.2" stroke="#8a8a8a" stroke-width="1.1"/><line x1="246.79999999999998" y1="535" x2="246.79999999999998" y2="548.2" stroke="#ffffff" stroke-width="1"/>
<line x1="246.0" y1="549.6" x2="246.0" y2="608.9" stroke="#e6e6e1" stroke-width="0.9"/>
<line x1="246.0" y1="609.3" x2="246.0" y2="623.9" stroke="#7fbaf6" stroke-width="0.9"/>
<line x1="332" y1="535" x2="332" y2="548.2" stroke="#8a8a8a" stroke-width="1.1"/><line x1="333.1" y1="535" x2="333.1" y2="548.2" stroke="#ffffff" stroke-width="1"/>
<line x1="332.3" y1="549.6" x2="332.3" y2="608.9" stroke="#e6e6e1" stroke-width="0.9"/>
<line x1="332.3" y1="609.3" x2="332.3" y2="623.9" stroke="#7fbaf6" stroke-width="0.9"/>
<line x1="401.3" y1="535" x2="401.3" y2="548.2" stroke="#8a8a8a" stroke-width="1.1"/><line x1="402.40000000000003" y1="535" x2="402.40000000000003" y2="548.2" stroke="#ffffff" stroke-width="1"/>
<line x1="401.6" y1="549.6" x2="401.6" y2="608.9" stroke="#e6e6e1" stroke-width="0.9"/>
<line x1="401.6" y1="609.3" x2="401.6" y2="623.9" stroke="#7fbaf6" stroke-width="0.9"/>
<line x1="470.4" y1="535" x2="470.4" y2="548.2" stroke="#8a8a8a" stroke-width="1.1"/><line x1="471.5" y1="535" x2="471.5" y2="548.2" stroke="#ffffff" stroke-width="1"/>
<line x1="470.7" y1="549.6" x2="470.7" y2="608.9" stroke="#e6e6e1" stroke-width="0.9"/>
<line x1="470.7" y1="609.3" x2="470.7" y2="623.9" stroke="#7fbaf6" stroke-width="0.9"/>
<line x1="521.7" y1="535" x2="521.7" y2="548.2" stroke="#8a8a8a" stroke-width="1.1"/><line x1="522.8000000000001" y1="535" x2="522.8000000000001" y2="548.2" stroke="#ffffff" stroke-width="1"/>
<line x1="522.0" y1="549.6" x2="522.0" y2="608.9" stroke="#e6e6e1" stroke-width="0.9"/>
<line x1="522.0" y1="609.3" x2="522.0" y2="623.9" stroke="#7fbaf6" stroke-width="0.9"/>
<line x1="642.5" y1="535" x2="642.5" y2="548.2" stroke="#8a8a8a" stroke-width="1.1"/><line x1="643.6" y1="535" x2="643.6" y2="548.2" stroke="#ffffff" stroke-width="1"/>
<line x1="642.8" y1="549.6" x2="642.8" y2="608.9" stroke="#e6e6e1" stroke-width="0.9"/>
<line x1="642.8" y1="609.3" x2="642.8" y2="623.9" stroke="#7fbaf6" stroke-width="0.9"/>
<text x="11" y="545.3" font-size="10.2" fill="#1a1a1a" text-anchor="start" font-family='"Liberation Sans", Arial, sans-serif' textLength="52" lengthAdjust="spacingAndGlyphs">Object Tree</text>
<text x="165.6" y="545.3" font-size="10.2" fill="#1a1a1a" text-anchor="start" font-family='"Liberation Sans", Arial, sans-serif' textLength="23.2" lengthAdjust="spacingAndGlyphs">Scale</text>
<text x="252" y="545.3" font-size="10.2" fill="#1a1a1a" text-anchor="start" font-family='"Liberation Sans", Arial, sans-serif' textLength="71" lengthAdjust="spacingAndGlyphs">Engineering U...</text>
<text x="338.8" y="545.3" font-size="10.2" fill="#1a1a1a" text-anchor="start" font-family='"Liberation Sans", Arial, sans-serif' textLength="15.7" lengthAdjust="spacingAndGlyphs">Tag</text>
<text x="407" y="545.3" font-size="10.2" fill="#1a1a1a" text-anchor="start" font-family='"Liberation Sans", Arial, sans-serif' textLength="55.5" lengthAdjust="spacingAndGlyphs">Engineerin...</text>
<text x="476.3" y="545.3" font-size="10.2" fill="#1a1a1a" text-anchor="start" font-family='"Liberation Sans", Arial, sans-serif' textLength="33.7" lengthAdjust="spacingAndGlyphs">Cursor1</text>
<text x="527.5" y="545.3" font-size="10.2" fill="#1a1a1a" text-anchor="start" font-family='"Liberation Sans", Arial, sans-serif' textLength="61.2" lengthAdjust="spacingAndGlyphs">Cursor1 Time</text>
<rect x="8.9" y="554.5" width="6.8" height="7.4" fill="#ffffff" stroke="#d2d2d2" stroke-width="0.9"/><path d="M10.2 558.2 H14.6" stroke="#111" stroke-width="1.2"/>
<g><rect x="19.2" y="551.6" width="13.6" height="13.2" fill="url(#ggrp)"/><path d="M20 555 H32.8 M20 558.4 H32.8 M20 561.6 H32.8" stroke="#151515" stroke-width="1.5"/><path d="M20.4 553 V564.8" stroke="#151515" stroke-width="1.1"/><path d="M19.4 564.5 H32.8" stroke="#151515" stroke-width="1" stroke-dasharray="1.2 0.9"/></g>
<text x="36" y="562.1" font-size="10.6" fill="#1a1a1a" text-anchor="start" font-family='"Liberation Sans", Arial, sans-serif' textLength="74" lengthAdjust="spacingAndGlyphs">MANEJO PIEDRA</text>
<path d="M26.4 565.4 V617.2" stroke="#8c8c8c" stroke-width="0.9" fill="none"/>
<path d="M26.4 573.2 H32.6" stroke="#a0a0a0" stroke-width="0.9" fill="none"/>
<path d="M32.8 573.4 L35 574.8 L39.8 569.4 L45.8 575.6" fill="none" stroke="#e12a76" stroke-width="1.6" stroke-linejoin="round" stroke-linecap="round"/>
<rect x="48.9" y="568.0" width="9.8" height="10.4" fill="url(#gchk)" stroke="#9c9cd6" stroke-width="1"/>
<rect x="49.9" y="569.0" width="7.8" height="8.4" fill="none" stroke="#c4c4e6" stroke-width="0.7"/>
<path d="M51 573.0 L53.4 575.5 L57 570.4" fill="none" stroke="#4a4a50" stroke-width="1.25"/>
<rect x="60.6" y="567.9" width="16.9" height="10.6" fill="url(#gred)"/>
<text x="80" y="576.9000000000001" font-size="10.6" fill="#111111" text-anchor="start" font-family='"Liberation Sans", Arial, sans-serif' textLength="67" lengthAdjust="spacingAndGlyphs">Corriente TB107</text>
<text x="163" y="576.9000000000001" font-size="10.6" fill="#111111" text-anchor="start" font-family='"Liberation Sans", Arial, sans-serif' textLength="28" lengthAdjust="spacingAndGlyphs">0 - 100</text>
<text x="249.3" y="576.9000000000001" font-size="10.6" fill="#111111" text-anchor="start" font-family='"Liberation Sans", Arial, sans-serif' textLength="17.6" lengthAdjust="spacingAndGlyphs">Amp</text>
<text x="336.3" y="576.9000000000001" font-size="10.6" fill="#111111" text-anchor="start" font-family='"Liberation Sans", Arial, sans-serif' textLength="61.3" lengthAdjust="spacingAndGlyphs">T_med_tc_tb...</text>
<text x="404.6" y="576.9000000000001" font-size="10.6" fill="#111111" text-anchor="start" font-family='"Liberation Sans", Arial, sans-serif' textLength="59.2" lengthAdjust="spacingAndGlyphs">0.000000 - 1...</text>
<text x="473" y="576.9000000000001" font-size="10.6" fill="#111111" text-anchor="start" font-family='"Liberation Sans", Arial, sans-serif' textLength="44.5" lengthAdjust="spacingAndGlyphs">20.845997</text>
<text x="525.2" y="576.9000000000001" font-size="10.6" fill="#111111" text-anchor="start" font-family='"Liberation Sans", Arial, sans-serif' textLength="108.6" lengthAdjust="spacingAndGlyphs">09/12/2019 02:24:02 a.m.</text>
<path d="M26.4 587.9 H32.6" stroke="#a0a0a0" stroke-width="0.9" fill="none"/>
<path d="M32.8 588.1 L35 589.5 L39.8 584.1 L45.8 590.3" fill="none" stroke="#e12a76" stroke-width="1.6" stroke-linejoin="round" stroke-linecap="round"/>
<rect x="48.9" y="582.7" width="9.8" height="10.4" fill="url(#gchk)" stroke="#9c9cd6" stroke-width="1"/>
<rect x="49.9" y="583.7" width="7.8" height="8.4" fill="none" stroke="#c4c4e6" stroke-width="0.7"/>
<path d="M51 587.7 L53.4 590.2 L57 585.1" fill="none" stroke="#4a4a50" stroke-width="1.25"/>
<rect x="60.6" y="582.6" width="16.9" height="10.6" fill="url(#ggreen)"/>
<text x="80" y="591.6" font-size="10.6" fill="#111111" text-anchor="start" font-family='"Liberation Sans", Arial, sans-serif' textLength="63.5" lengthAdjust="spacingAndGlyphs">Vibracion CV2B</text>
<text x="163" y="591.6" font-size="10.6" fill="#111111" text-anchor="start" font-family='"Liberation Sans", Arial, sans-serif' textLength="28" lengthAdjust="spacingAndGlyphs">0 - 100</text>
<text x="249.3" y="591.6" font-size="10.6" fill="#111111" text-anchor="start" font-family='"Liberation Sans", Arial, sans-serif' textLength="10.6" lengthAdjust="spacingAndGlyphs">Kg</text>
<text x="336.3" y="591.6" font-size="10.6" fill="#111111" text-anchor="start" font-family='"Liberation Sans", Arial, sans-serif' textLength="61.3" lengthAdjust="spacingAndGlyphs">T_Med_dv_c...</text>
<text x="404.6" y="591.6" font-size="10.6" fill="#111111" text-anchor="start" font-family='"Liberation Sans", Arial, sans-serif' textLength="59.2" lengthAdjust="spacingAndGlyphs">0.000000 - 1...</text>
<text x="473" y="591.6" font-size="10.6" fill="#111111" text-anchor="start" font-family='"Liberation Sans", Arial, sans-serif' textLength="14" lengthAdjust="spacingAndGlyphs">n/a</text>
<text x="525.2" y="591.6" font-size="10.6" fill="#111111" text-anchor="start" font-family='"Liberation Sans", Arial, sans-serif' textLength="108.6" lengthAdjust="spacingAndGlyphs">09/12/2019 02:24:02 a.m.</text>
<path d="M26.4 602.5 H32.6" stroke="#a0a0a0" stroke-width="0.9" fill="none"/>
<path d="M32.8 602.7 L35 604.1 L39.8 598.7 L45.8 604.9" fill="none" stroke="#e12a76" stroke-width="1.6" stroke-linejoin="round" stroke-linecap="round"/>
<rect x="48.9" y="597.3" width="9.8" height="10.4" fill="url(#gchk)" stroke="#9c9cd6" stroke-width="1"/>
<rect x="49.9" y="598.3" width="7.8" height="8.4" fill="none" stroke="#c4c4e6" stroke-width="0.7"/>
<path d="M51 602.3 L53.4 604.8 L57 599.7" fill="none" stroke="#4a4a50" stroke-width="1.25"/>
<rect x="60.6" y="597.2" width="16.9" height="10.6" fill="url(#gblue)"/>
<text x="80" y="606.2" font-size="10.6" fill="#111111" text-anchor="start" font-family='"Liberation Sans", Arial, sans-serif' textLength="45.5" lengthAdjust="spacingAndGlyphs">Peso T03A</text>
<text x="163" y="606.2" font-size="10.6" fill="#111111" text-anchor="start" font-family='"Liberation Sans", Arial, sans-serif' textLength="34" lengthAdjust="spacingAndGlyphs">0 - 8000</text>
<text x="249.3" y="606.2" font-size="10.6" fill="#111111" text-anchor="start" font-family='"Liberation Sans", Arial, sans-serif' textLength="10.6" lengthAdjust="spacingAndGlyphs">Kg</text>
<text x="336.3" y="606.2" font-size="10.6" fill="#111111" text-anchor="start" font-family='"Liberation Sans", Arial, sans-serif' textLength="61" lengthAdjust="spacingAndGlyphs">T_Med_wt_t03</text>
<text x="404.6" y="606.2" font-size="10.6" fill="#111111" text-anchor="start" font-family='"Liberation Sans", Arial, sans-serif' textLength="59.2" lengthAdjust="spacingAndGlyphs">0.000000 - 8...</text>
<text x="473" y="606.2" font-size="10.6" fill="#111111" text-anchor="start" font-family='"Liberation Sans", Arial, sans-serif' textLength="21" lengthAdjust="spacingAndGlyphs">5886</text>
<text x="525.2" y="606.2" font-size="10.6" fill="#111111" text-anchor="start" font-family='"Liberation Sans", Arial, sans-serif' textLength="108.6" lengthAdjust="spacingAndGlyphs">09/12/2019 02:24:02 a.m.</text>
<path d="M26.4 617.2 H32.6" stroke="#a0a0a0" stroke-width="0.9" fill="none"/>
<path d="M32.8 617.4 L35 618.8 L39.8 613.4 L45.8 619.6" fill="none" stroke="#e12a76" stroke-width="1.6" stroke-linejoin="round" stroke-linecap="round"/>
<rect x="48.9" y="612.0" width="9.8" height="10.4" fill="url(#gchk)" stroke="#9c9cd6" stroke-width="1"/>
<rect x="49.9" y="613.0" width="7.8" height="8.4" fill="none" stroke="#c4c4e6" stroke-width="0.7"/>
<path d="M51 617.0 L53.4 619.5 L57 614.4" fill="none" stroke="#4a4a50" stroke-width="1.25"/>
<rect x="60.6" y="611.9" width="16.9" height="10.6" fill="url(#gorange)"/>
<text x="80" y="620.9000000000001" font-size="10.6" fill="#ffffff" text-anchor="start" font-family='"Liberation Sans", Arial, sans-serif' textLength="45.5" lengthAdjust="spacingAndGlyphs">Peso T03B</text>
<text x="163" y="620.9000000000001" font-size="10.6" fill="#ffffff" text-anchor="start" font-family='"Liberation Sans", Arial, sans-serif' textLength="34" lengthAdjust="spacingAndGlyphs">0 - 8000</text>
<text x="249.3" y="620.9000000000001" font-size="10.6" fill="#ffffff" text-anchor="start" font-family='"Liberation Sans", Arial, sans-serif' textLength="10.6" lengthAdjust="spacingAndGlyphs">Kg</text>
<text x="336.3" y="620.9000000000001" font-size="10.6" fill="#ffffff" text-anchor="start" font-family='"Liberation Sans", Arial, sans-serif' textLength="58" lengthAdjust="spacingAndGlyphs">T_Med_wt_t...</text>
<text x="404.6" y="620.9000000000001" font-size="10.6" fill="#ffffff" text-anchor="start" font-family='"Liberation Sans", Arial, sans-serif' textLength="59.2" lengthAdjust="spacingAndGlyphs">0.000000 - 8...</text>
<text x="473" y="620.9000000000001" font-size="10.6" fill="#ffffff" text-anchor="start" font-family='"Liberation Sans", Arial, sans-serif' textLength="44.5" lengthAdjust="spacingAndGlyphs">43.685455</text>
<text x="525.2" y="620.9000000000001" font-size="10.6" fill="#ffffff" text-anchor="start" font-family='"Liberation Sans", Arial, sans-serif' textLength="108.6" lengthAdjust="spacingAndGlyphs">09/12/2019 02:24:02 a.m.</text>
</svg>
</body></html>
